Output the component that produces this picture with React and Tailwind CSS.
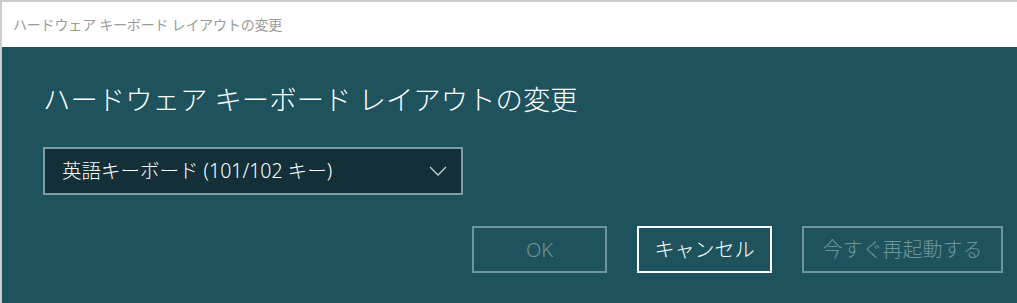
import React from 'react';

const font = { fontFamily: '"Noto Sans", "Noto Sans CJK JP", sans-serif' };

export default function App() {
  return (
    <div
      className="w-[1017px] h-[303px] overflow-hidden flex flex-col border-l-2 border-t-2 border-[#cdcdcd] bg-white"
      style={font}
    >
      {/* Title bar */}
      <div className="h-[45px] shrink-0 bg-white flex items-center pl-[11px] text-[14px] text-[#9a9a9a] tracking-[-0.2px]">
        ハードウェア キーボード レイアウトの変更
      </div>

      {/* Body */}
      <div className="flex-1 bg-[#1e525c] pl-[41px] pt-[33px]">
        <h1 className="text-[27.4px] leading-[40px] font-light text-white">
          ハードウェア キーボード レイアウトの変更
        </h1>

        <div className="mt-[27px] w-[420px] h-[48px] border-2 border-[#7c9ba2] bg-[#133039] flex items-center justify-between pl-[17px] pr-[14px]">
          <span className="text-[19.5px] font-light text-white">英語キーボード (101/102 キー)</span>
          <svg width="18" height="10" viewBox="0 0 18 10" fill="none">
            <polyline points="1,1 9,9 17,1" stroke="#c5d2d5" strokeWidth="1.3" />
          </svg>
        </div>

        <div className="mt-[31px] flex justify-end gap-[30px] pr-[14px]">
          <button className="w-[135px] h-[47px] border-2 border-[#6f959c] text-[20px] font-light text-[#6f959c]">
            OK
          </button>
          <button className="w-[135px] h-[47px] border-2 border-white text-[20px] font-light text-white">
            キャンセル
          </button>
          <button className="w-[201px] h-[47px] border-2 border-[#6f959c] text-[20px] font-light text-[#6f959c]">
            今すぐ再起動する
          </button>
        </div>
      </div>
    </div>
  );
}
